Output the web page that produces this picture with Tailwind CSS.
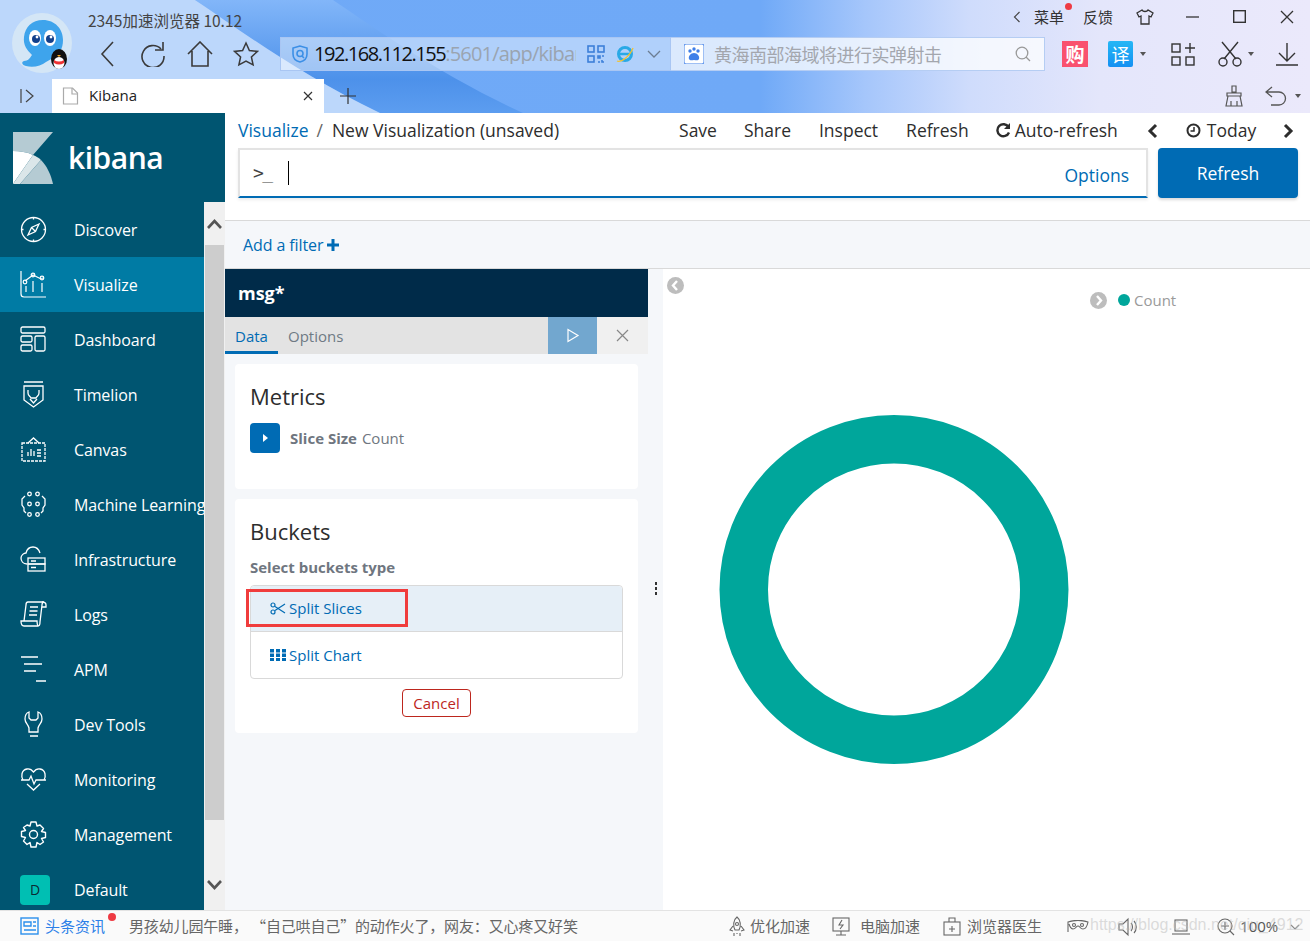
<!DOCTYPE html>
<html lang="en">
<head>
    <meta charset="UTF-8">
    <title>Kibana</title>
    <script src="https://cdn.jsdelivr.net/npm/@tailwindcss/browser@4"></script>
</head>
<body class="w-[1310px] h-[941px] overflow-hidden flex flex-col bg-white font-['Open_Sans','Noto_Sans_CJK_SC',sans-serif]">

    <!-- browser chrome -->
    <header class="relative h-[113px] shrink-0 overflow-hidden font-['Noto_Sans_CJK_SC','Open_Sans',sans-serif] text-[#333]">
        <svg class="absolute inset-0" width="1310" height="113" aria-hidden="true">
            <defs>
                <linearGradient id="sky" x1="0" y1="0" x2="1" y2="0">
                    <stop offset="0" stop-color="#70aaf7"/>
                    <stop offset="0.58" stop-color="#6fa9f7"/>
                    <stop offset="0.66" stop-color="#a5c6fb"/>
                    <stop offset="0.74" stop-color="#cfdcfc"/>
                    <stop offset="0.84" stop-color="#e4e6fb"/>
                    <stop offset="1" stop-color="#ebe9fb"/>
                </linearGradient>
                <linearGradient id="band" x1="0" y1="0" x2="0" y2="1">
                    <stop offset="0" stop-color="#82b6f9"/>
                    <stop offset="0.7" stop-color="#4d91ea"/>
                    <stop offset="1" stop-color="#5c9df0"/>
                </linearGradient>
            </defs>
            <rect width="1310" height="113" fill="url(#sky)"/>
            <path d="M195 0H333C370 25 440 75 523 113H380C300 75 240 30 195 0Z" fill="url(#band)"/>
            <path d="M0 0H195C240 30 300 75 380 113H0Z" fill="#bcd7fb"/>
        </svg>

        <div class="relative flex h-[79px]">
            <!-- logo -->
            <div class="w-[88px] shrink-0 pl-[12px] pt-[13px]">
                <svg width="62" height="62" viewBox="0 0 62 62">
                    <circle cx="30" cy="30" r="30" fill="#d4e6f6"/>
                    <path d="M31 7c12 0 20 9 20 20 0 9-4 15-10 18l-7 4c-5 4-13 6-20 4-4-1-5-4-2-5 4 0 6-3 8-6-5-5-9-10-8-18C13 14 20 7 31 7Z" fill="#3ea4ec"/>
                    <ellipse cx="23" cy="25" rx="6" ry="8" fill="#fff"/>
                    <ellipse cx="38" cy="25" rx="6" ry="8" fill="#fff"/>
                    <circle cx="24" cy="26" r="4" fill="#12408c"/>
                    <circle cx="38" cy="26" r="4" fill="#12408c"/>
                    <circle cx="25" cy="24" r="1.4" fill="#fff"/>
                    <circle cx="39" cy="24" r="1.4" fill="#fff"/>
                    <ellipse cx="47" cy="46" rx="8" ry="10" fill="#111"/>
                    <ellipse cx="47" cy="50" rx="5.5" ry="6" fill="#fff"/>
                    <path d="M42 47q5 3 10 0v3q-5 3-10 0Z" fill="#e33"/>
                    <path d="M45 42h4l-2 2Z" fill="#f5a623"/>
                </svg>
            </div>
            <div class="flex-1 min-w-0 flex flex-col">
                <!-- title row -->
                <div class="h-[36px] flex items-center pt-[5px] pr-[16px]">
                    <span class="text-[15.5px] text-[#444] leading-none">2345加速浏览器 10.12</span>
                    <div class="ml-auto mb-[8px] flex items-center">
                        <svg width="8" height="12" viewBox="0 0 8 12" fill="none" stroke="#444" stroke-width="1.2"><path d="M6.5 1 1.5 6l5 5"/></svg>
                        <span class="relative ml-[13px] text-[15px] leading-none">菜单<span class="absolute right-[-8px] top-[-6px] w-[7px] h-[7px] rounded-full bg-[#ee3a43]"></span></span>
                        <span class="ml-[19px] text-[15px] leading-none">反馈</span>
                        <svg class="ml-[23px]" width="18" height="16" viewBox="0 0 18 16" fill="none" stroke="#333" stroke-width="1.3"><path d="M6 1 1 4l2 4 2-1v8h8V7l2 1 2-4-5-3c-1 2-5 2-6 0Z"/></svg>
                        <svg class="ml-[32px]" width="13" height="13" viewBox="0 0 13 13" stroke="#333" stroke-width="1.3"><path d="M0 7h13"/></svg>
                        <svg class="ml-[34px]" width="13" height="13" viewBox="0 0 13 13" fill="none" stroke="#333" stroke-width="1.4"><rect x=".7" y=".7" width="11.6" height="11.6"/></svg>
                        <svg class="ml-[34px]" width="14" height="14" viewBox="0 0 14 14" stroke="#333" stroke-width="1.3"><path d="m1 1 12 12M13 1 1 13"/></svg>
                    </div>
                </div>
                <!-- toolbar row -->
                <div class="h-[36px] flex items-center">
                    <svg class="ml-[12px]" width="14" height="26" viewBox="0 0 14 26" fill="none" stroke="#3a3a3a" stroke-width="1.6"><path d="M13 1 2 13l11 12"/></svg>
                    <svg class="ml-[26px]" width="26" height="26" viewBox="0 0 26 26" fill="none" stroke="#3a3a3a" stroke-width="1.6"><path d="M21 8a11 11 0 1 0 3 7"/><path d="M23 1v8h-8"/></svg>
                    <svg class="ml-[21px]" width="26" height="26" viewBox="0 0 26 26" fill="none" stroke="#3a3a3a" stroke-width="1.6"><path d="M1 13 13 1l12 12M5 10v15h16V10"/></svg>
                    <svg class="ml-[20px]" width="26" height="26" viewBox="0 0 26 26" fill="none" stroke="#3a3a3a" stroke-width="1.5"><path d="m13 2 3.4 7.5 8 .9-6 5.5 1.7 8L13 20l-7.100 3.900 1.700-8-6-5.500 8-.9Z"/></svg>
                    <!-- address bar -->
                    <div class="ml-[21px] w-[391px] h-[34px] flex items-center bg-white/45 border border-[#a9c6f3] pl-[11px]">
                        <svg width="16" height="18" viewBox="0 0 16 18" fill="none" stroke="#3c8fe6" stroke-width="1.6"><path d="M8 1 1 3v6c0 4 3 7 7 8 4-1 7-4 7-8V3Z"/><circle cx="8" cy="8.500" r="3"/><path d="m10 11 2 2"/></svg>
                        <div class="ml-[6px] w-[262px] overflow-hidden whitespace-nowrap text-[20px] leading-none tracking-[-1.45px] font-['Open_Sans',sans-serif] text-[#111]">192.168.112.155<span class="text-[#9aa4b0] tracking-[-0.8px]">:5601/app/kibana#/visualize</span></div>
                        <svg class="ml-[11px]" width="18" height="18" viewBox="0 0 18 18" fill="none" stroke="#3c7fd9" stroke-width="1.600"><rect x="1" y="1" width="6" height="6"/><rect x="11" y="1" width="6" height="6"/><rect x="1" y="11" width="6" height="6"/><path d="M11 11h2v2h-2zM15 11h2M11 17h2M15 15v2h2"/></svg>
                        <svg class="ml-[10px]" width="20" height="20" viewBox="0 0 20 20" fill="none"><circle cx="10" cy="10" r="6.500" stroke="#29a9e6" stroke-width="3"/><path d="M5 10h10" stroke="#29a9e6" stroke-width="2.500"/><path d="M2 17c4 2 13-5 16-13" stroke="#f2c230" stroke-width="1.300"/></svg>
                        <svg class="ml-[12px]" width="14" height="8" viewBox="0 0 14 8" fill="none" stroke="#6c7d92" stroke-width="1.300"><path d="m1 1 6 6 6-6"/></svg>
                    </div>
                    <!-- search bar -->
                    <div class="w-[374px] h-[34px] flex items-center bg-white/75 border border-l-0 border-[#b5cdf3] pl-[13px]">
                        <svg width="20" height="20" viewBox="0 0 20 20"><rect width="20" height="20" rx="2" fill="#fff" stroke="#3f7fe8"/><g fill="#3f7fe8"><circle cx="6" cy="7" r="1.700"/><circle cx="10" cy="5" r="1.700"/><circle cx="14" cy="7" r="1.700"/><path d="M10 9c3 0 6 3 5 6-1 2-3 1-5 1s-4 1-5-1c-1-3 2-6 5-6Z"/></g></svg>
                        <span class="ml-[10px] text-[18px] leading-none text-[#a3a6ad] tracking-[-0.5px] whitespace-nowrap">黄海南部海域将进行实弹射击</span>
                        <svg class="ml-auto mr-[13px]" width="16" height="16" viewBox="0 0 16 16" fill="none" stroke="#999" stroke-width="1.300"><circle cx="7" cy="7" r="5.800"/><path d="m11 11 4 4"/></svg>
                    </div>
                    <!-- tools -->
                    <div class="ml-[17px] w-[26px] h-[26px] bg-[#f9516f] text-white text-[19px] font-bold leading-[26px] text-center">购</div>
                    <div class="ml-[20px] w-[25px] h-[26px] rounded-[2px] bg-gradient-to-b from-[#26b7f5] to-[#1590f2] text-white text-[18px] leading-[26px] text-center">译</div>
                    <span class="ml-[7px] w-0 h-0 border-x-[3px] border-x-transparent border-t-[4px] border-t-[#555]"></span>
                    <svg class="ml-[25px]" width="24" height="24" viewBox="0 0 24 24" fill="none" stroke="#333" stroke-width="1.400"><rect x="1" y="2" width="8" height="8"/><rect x="1" y="15" width="8" height="8"/><rect x="15" y="15" width="8" height="8"/><path d="M19 1v10M14 6h10"/></svg>
                    <svg class="ml-[23px]" width="24" height="26" viewBox="0 0 24 26" fill="none" stroke="#333" stroke-width="1.400"><path d="m4 1 14 17M20 1 6 18"/><circle cx="5" cy="21" r="4"/><circle cx="19" cy="21" r="4"/></svg>
                    <span class="ml-[6px] w-0 h-0 border-x-[3px] border-x-transparent border-t-[4px] border-t-[#555]"></span>
                    <svg class="ml-[22px]" width="22" height="24" viewBox="0 0 22 24" fill="none" stroke="#333" stroke-width="1.400"><path d="M11 1v17M3 11l8 8 8-8M0 23h22"/></svg>
                </div>
            </div>
        </div>

        <!-- tab row -->
        <div class="relative h-[34px] flex">
            <div class="w-[52px] flex items-center pl-[20px]">
                <svg width="14" height="14" viewBox="0 0 14 14" fill="none" stroke="#444" stroke-width="1.200"><path d="M1 0v14M6 1l7 6-7 6"/></svg>
            </div>
            <div class="w-[272px] bg-white flex items-center pl-[10px] font-['Open_Sans','Noto_Sans_CJK_SC',sans-serif]">
                <svg width="17" height="18" viewBox="0 0 17 18" fill="none" stroke="#aaa" stroke-width="1.200"><path d="M1.500 1h9l5 5v11h-14Z"/><path d="M10 1v6h6"/></svg>
                <span class="ml-[10px] mb-[2px] text-[15px] text-[#222]">Kibana</span>
                <svg class="ml-auto mr-[11px]" width="10" height="10" viewBox="0 0 10 10" stroke="#333" stroke-width="1.200"><path d="m1 1 8 8M9 1 1 9"/></svg>
            </div>
            <svg class="ml-[15px] self-center" width="18" height="18" viewBox="0 0 18 18" stroke="#333" stroke-width="1.200"><path d="M9 1v16M1 9h16"/></svg>
            <div class="ml-auto flex items-center pr-[9px]">
                <svg width="22" height="22" viewBox="0 0 22 22" fill="none" stroke="#555" stroke-width="1.200"><path d="M9 1h4v6H9ZM4 8h14v3H4ZM3 21l2-10h12l2 10ZM8 21v-5M14 21v-5"/></svg>
                <svg class="ml-[20px]" width="22" height="20" viewBox="0 0 22 20" fill="none" stroke="#555" stroke-width="1.300"><path d="M7 1 1 6l6 5M1 6h13a6 6 0 0 1 0 13H6"/></svg>
                <span class="ml-[8px] w-0 h-0 border-x-[3px] border-x-transparent border-t-[4px] border-t-[#555]"></span>
            </div>
        </div>
    </header>

    <!-- kibana app -->
    <div class="flex-1 min-h-0 flex">
        <aside class="w-[225px] shrink-0 flex flex-col bg-[#005571] text-white">
            <div class="h-[89px] shrink-0 flex items-center pl-[13px]">
                <svg width="41" height="52" viewBox="0 0 41 52">
                    <path d="M0 0h40L20 23C14 20 7 19 0 19Z" fill="#b5cbd3"/>
                    <path d="M0 19c7 0 14 1 20 4L0 52Z" fill="#fff"/>
                    <path d="M20 23 0 52h7l21-24c-2-2-5-4-8-5Z" fill="#dbe6e9"/>
                    <path d="M28 28C34 34 38 43 40 52H7Z" fill="#b5cbd3"/>
                </svg>
                <span class="ml-[14px] text-[30px] font-semibold leading-none tracking-[-0.5px]">kibana</span>
            </div>
            <div class="flex-1 min-h-0 flex">
                <nav class="w-[204px] text-[16px] tracking-[-0.1px] overflow-hidden">
                    <a class="h-[55px] flex items-center pl-[20px]">
                        <svg class="w-[27px] h-[27px] shrink-0" viewBox="0 0 27 27" fill="none" stroke="#fff" stroke-width="1.300"><circle cx="13.500" cy="13.500" r="12"/><path d="m19 8-3.500 7.500L8 19l3.500-7.500ZM11.500 11.500l4 4"/><path d="M13.500 1.500v2M13.500 23.500v2M1.500 13.500h2M23.500 13.500h2"/></svg>
                        <span class="ml-[27px] whitespace-nowrap">Discover</span>
                    </a>
                    <a class="h-[55px] flex items-center pl-[20px] bg-[#007ba4]">
                        <svg class="w-[27px] h-[27px] shrink-0" viewBox="0 0 27 27" fill="none" stroke="#fff" stroke-width="1.200"><path d="M1 0v23a3 3 0 0 0 3 3h22"/><path d="m5 10 8-6 7 3.500 4-.5"/><circle cx="5" cy="11" r="1.800"/><circle cx="13" cy="4" r="1.800"/><circle cx="22" cy="7" r="1.800"/><path d="M6 15v6M13 10v11M22 12v9"/></svg>
                        <span class="ml-[27px] whitespace-nowrap">Visualize</span>
                    </a>
                    <a class="h-[55px] flex items-center pl-[20px]">
                        <svg class="w-[27px] h-[27px] shrink-0" viewBox="0 0 27 27" fill="none" stroke="#fff" stroke-width="1.300"><rect x="1" y="1" width="24" height="6" rx="1.500"/><rect x="1" y="10" width="11" height="6" rx="1.500"/><rect x="1" y="19" width="11" height="6" rx="1.500"/><rect x="15" y="10" width="10" height="15" rx="1.500"/></svg>
                        <span class="ml-[27px] whitespace-nowrap">Dashboard</span>
                    </a>
                    <a class="h-[55px] flex items-center pl-[20px]">
                        <svg class="w-[27px] h-[27px] shrink-0" viewBox="0 0 27 27" fill="none" stroke="#fff" stroke-width="1.300"><path d="M4 1h19M4 5h19v14l-9.500 7L4 19Z"/><path d="M8 9v3c0 3 2 3 3 5h5c1-2 3-2 3-5V9"/><path d="m10 18 3.500 4 3.500-4"/></svg>
                        <span class="ml-[27px] whitespace-nowrap">Timelion</span>
                    </a>
                    <a class="h-[55px] flex items-center pl-[20px]">
                        <svg class="w-[27px] h-[27px] shrink-0" viewBox="0 0 27 27" fill="none" stroke="#fff" stroke-width="1.300"><path d="M2 7h23v18H2Z" stroke-dasharray="3 1"/><path d="m8 7 5.500-5L19 7"/><path d="M8 20v-4M11 20v-7M14 20v-5M17 14h4M17 17h4M17 20h4" /></svg>
                        <span class="ml-[27px] whitespace-nowrap">Canvas</span>
                    </a>
                    <a class="h-[55px] flex items-center pl-[20px]">
                        <svg class="w-[27px] h-[27px] shrink-0" viewBox="0 0 27 27" fill="none" stroke="#fff" stroke-width="1.300"><circle cx="9.500" cy="3" r="1.800"/><circle cx="17.500" cy="3" r="1.800"/><circle cx="9.500" cy="13" r="1.800"/><circle cx="17.500" cy="13" r="1.800"/><circle cx="9.500" cy="23.500" r="1.800"/><circle cx="17.500" cy="23.500" r="1.800"/><path d="M5 5 2 8v6l2 3v3l2 2M22 5l3 3v6l-2 3v3l-2 2"/></svg>
                        <span class="ml-[27px] whitespace-nowrap">Machine Learning</span>
                    </a>
                    <a class="h-[55px] flex items-center pl-[20px]">
                        <svg class="w-[27px] h-[27px] shrink-0" viewBox="0 0 27 27" fill="none" stroke="#fff" stroke-width="1.300"><path d="M7 18C3 18 1 15 1 12s3-5 5-5c1-4 4-6 7-6 4 0 6 3 7 6"/><rect x="8" y="12" width="17" height="6"/><rect x="8" y="18" width="17" height="7"/><path d="M11 15h5M11 21.500h5"/></svg>
                        <span class="ml-[27px] whitespace-nowrap">Infrastructure</span>
                    </a>
                    <a class="h-[55px] flex items-center pl-[20px]">
                        <svg class="w-[27px] h-[27px] shrink-0" viewBox="0 0 27 27" fill="none" stroke="#fff" stroke-width="1.300"><path d="M22 1H8C6 1 6 3 6 4l-2 16H1c0 3 1 5 3 5h14c2 0 2-2 2-4l2-17c0-2 1-3 2-3h-2ZM4 20h13c0 2 0 3 1 5"/><path d="M10 6h8M9.500 10h8M9 14h8"/><path d="M22 1c2 0 4 1 4 3v2h-4"/></svg>
                        <span class="ml-[27px] whitespace-nowrap">Logs</span>
                    </a>
                    <a class="h-[55px] flex items-center pl-[20px]">
                        <svg class="w-[27px] h-[27px] shrink-0" viewBox="0 0 27 27" fill="none" stroke="#fff" stroke-width="1.300"><path d="M1 1h17M4 8h18M4 15h12M16 25h10" /></svg>
                        <span class="ml-[27px] whitespace-nowrap">APM</span>
                    </a>
                    <a class="h-[55px] flex items-center pl-[20px]">
                        <svg class="w-[27px] h-[27px] shrink-0" viewBox="0 0 27 27" fill="none" stroke="#fff" stroke-width="1.300"><path d="M9 1C6 2 5 5 5 8c0 4 3 5 4 9v4h9v-4c1-4 4-5 4-9 0-3-1-6-4-7v6l-2 2h-5L9 7ZM10 25h8"/></svg>
                        <span class="ml-[27px] whitespace-nowrap">Dev Tools</span>
                    </a>
                    <a class="h-[55px] flex items-center pl-[20px]">
                        <svg class="w-[27px] h-[27px] shrink-0" viewBox="0 0 27 27" fill="none" stroke="#fff" stroke-width="1.300"><path d="M3 14C1 11 1 4 7 3c3-.5 5 1 6.500 3C15 4 17 2.500 20 3c6 1 6 8 4 11"/><path d="M1 14h8l2-4 3 8 2-4h10"/><path d="m7 18 6.500 6 6.500-6"/></svg>
                        <span class="ml-[27px] whitespace-nowrap">Monitoring</span>
                    </a>
                    <a class="h-[55px] flex items-center pl-[20px]">
                        <svg class="w-[27px] h-[27px] shrink-0" viewBox="0 0 27 27" fill="none" stroke="#fff" stroke-width="1.400"><circle cx="13.500" cy="13.500" r="4"/><path d="M11 1h5l1 4 3-1 3.500 3.500-2 3 4 1v5l-4 1 2 3.500L20 23.500l-3-2-1 4.500h-5l-1-4.500-3 2L3.500 20l2-3.500-4-1v-5l4-1-2-3L7 4l3 1Z" stroke-linejoin="round"/></svg>
                        <span class="ml-[27px] whitespace-nowrap">Management</span>
                    </a>
                    <a class="h-[55px] flex items-center pl-[20px]">
                        <span class="w-[30px] h-[30px] shrink-0 rounded-[4px] bg-[#00bfb3] text-[#0a2a33] text-[14px] leading-[30px] text-center">D</span>
                        <span class="ml-[24px] whitespace-nowrap">Default</span>
                    </a>
                </nav>
                <!-- scrollbar -->
                <div class="w-[21px] shrink-0 flex flex-col bg-[#f0f0f0]">
                    <div class="h-[43px] shrink-0 flex items-center justify-center">
                        <svg width="15" height="10" viewBox="0 0 15 10" fill="none" stroke="#555" stroke-width="2.600"><path d="m1 9 6.500-7L14 9"/></svg>
                    </div>
                    <div class="h-[575px] shrink-0 w-[19px] ml-[1px] bg-[#cdcdcd]"></div>
                    <div class="flex-1 flex items-center justify-center pt-[40px]">
                        <svg width="15" height="10" viewBox="0 0 15 10" fill="none" stroke="#555" stroke-width="2.600"><path d="m1 1 6.500 7L14 1"/></svg>
                    </div>
                </div>
            </div>
        </aside>

        <main class="flex-1 min-w-0 flex flex-col text-[#2d2d2d]">
            <!-- top nav -->
            <div class="h-[35px] shrink-0 flex items-center text-[17.500px] pl-[13px] whitespace-nowrap">
                <span class="text-[#006bb4]">Visualize</span>
                <span class="ml-[8px] text-[#666]">/</span>
                <span class="ml-[9px]">New Visualization (unsaved)</span>
                <span class="ml-[120px]">Save</span>
                <span class="ml-[27px]">Share</span>
                <span class="ml-[28px]">Inspect</span>
                <span class="ml-[28px]">Refresh</span>
                <svg class="ml-[27px]" width="15" height="15" viewBox="0 0 15 15" fill="none" stroke="#2d2d2d" stroke-width="2.400"><path d="M12.500 4A6 6 0 1 0 13 9.500"/><path d="M14 0v6H8" fill="#2d2d2d" stroke="none"/></svg>
                <span class="ml-[4px]">Auto-refresh</span>
                <svg class="ml-[29px]" width="11" height="16" viewBox="0 0 11 16" fill="none" stroke="#2d2d2d" stroke-width="3"><path d="M9 2 3 8l6 6"/></svg>
                <svg class="ml-[28px]" width="15" height="15" viewBox="0 0 15 15" fill="none" stroke="#2d2d2d" stroke-width="2"><circle cx="7.500" cy="7.500" r="6"/><path d="M8 4v4H4.500" stroke-width="1.500"/></svg>
                <span class="ml-[6px]">Today</span>
                <svg class="ml-[27px]" width="11" height="16" viewBox="0 0 11 16" fill="none" stroke="#2d2d2d" stroke-width="3"><path d="m2 2 6 6-6 6"/></svg>
            </div>

            <!-- query bar -->
            <div class="h-[73px] shrink-0 flex pl-[13px] pr-[12px] border-b border-[#d9d9d9]">
                <div class="w-[910px] h-[50px] flex items-center border-2 border-[#e3e3e3] border-b-[#006bb4] shadow-[0_2px_3px_rgba(0,0,0,0.08)] pl-[13px] pr-[17px]">
                    <span class="text-[18px] leading-none text-[#444] font-['DejaVu_Sans_Mono',monospace] tracking-[-1.5px]">&gt;_</span>
                    <span class="ml-[16px] w-px h-[24px] bg-black"></span>
                    <span class="ml-auto pt-[5px] text-[17.500px] text-[#006bb4]">Options</span>
                </div>
                <button class="ml-[10px] w-[140px] h-[50px] rounded-[4px] bg-[#006bb4] text-white text-[17.500px] shadow-[0_2px_3px_rgba(0,0,0,0.15)]">Refresh</button>
            </div>

            <!-- filter bar -->
            <div class="h-[48px] shrink-0 flex items-center pl-[18px] bg-[#f5f7fa] border-b border-[#d9d9d9] text-[16px] tracking-[-0.1px] text-[#006bb4]">
                <span>Add a filter</span>
                <svg class="ml-[4px]" width="12" height="12" viewBox="0 0 12 12" fill="#006bb4"><path d="M4.500 0h3v4.500H12v3H7.500V12h-3V7.500H0v-3h4.500Z"/></svg>
            </div>

            <!-- editor -->
            <div class="flex-1 min-h-0 flex">
                <div class="w-[438px] shrink-0 flex bg-[#f5f7fa]">
                    <div class="w-[423px] shrink-0">
                        <div class="h-[48px] flex items-center pl-[13px] bg-[#002b49] text-white text-[18px] font-bold">msg*</div>
                        <div class="h-[37px] flex bg-[#e3e3e3] text-[15px]">
                            <span class="w-[53px] pt-[4px] flex items-center justify-center text-[#006bb4] border-b-[3px] border-[#006bb4]">Data</span>
                            <span class="ml-[10px] pt-[2px] flex items-center text-[#6f7a84]">Options</span>
                            <span class="ml-auto w-[49px] flex items-center justify-center bg-[#72a7cf]">
                                <svg width="14" height="15" viewBox="0 0 14 15" fill="none" stroke="#fff" stroke-width="1.200"><path d="M2 1.500v12l10-6Z"/></svg>
                            </span>
                            <span class="w-[51px] flex items-center justify-center bg-[#f0f0f0]">
                                <svg width="13" height="13" viewBox="0 0 13 13" stroke="#888" stroke-width="1.200"><path d="m1 1 11 11M12 1 1 12"/></svg>
                            </span>
                        </div>
                        <div class="px-[10px] pt-[10px]">
                            <section class="h-[125px] bg-white rounded-[4px] pl-[15px] pt-[16px]">
                                <h2 class="text-[22px] leading-[32px] text-[#2d2d2d]">Metrics</h2>
                                <div class="mt-[11px] flex items-center">
                                    <span class="w-[30px] h-[30px] rounded-[4px] bg-[#006bb4] flex items-center justify-center">
                                        <span class="w-0 h-0 border-y-[4px] border-y-transparent border-l-[5px] border-l-white"></span>
                                    </span>
                                    <span class="ml-[10px] text-[15px] font-bold text-[#6f7680]">Slice Size</span>
                                    <span class="ml-[5px] text-[15px] text-[#6f7680]">Count</span>
                                </div>
                            </section>
                            <section class="mt-[10px] h-[234px] bg-white rounded-[4px] px-[15px] pt-[16px]">
                                <h2 class="text-[22px] leading-[32px] text-[#2d2d2d]">Buckets</h2>
                                <p class="mt-[10px] text-[15px] leading-[20px] font-bold text-[#6f7680]">Select buckets type</p>
                                <div class="relative mt-[8px] h-[94px] border border-[#d9d9d9] rounded-[4px] text-[15px] text-[#006bb4]">
                                    <div class="h-[46px] flex items-center pl-[19px] bg-[#e6eff7] border-b border-[#d9d9d9] rounded-t-[4px]">
                                        <svg width="16" height="13" viewBox="0 0 16 13" fill="none" stroke="#006bb4" stroke-width="1.200"><circle cx="3" cy="3" r="2"/><circle cx="3" cy="10" r="2"/><path d="M5 4.500 15 11M5 8.500 15 2"/></svg>
                                        <span class="ml-[3px]">Split Slices</span>
                                    </div>
                                    <div class="h-[46px] flex items-center pl-[19px]">
                                        <svg width="16" height="12" viewBox="0 0 16 12" fill="#006bb4"><path d="M0 0h4v3.500H0ZM6 0h4v3.500H6ZM12 0h4v3.500h-4ZM0 4.500h4V8H0ZM6 4.500h4V8H6ZM12 4.500h4V8h-4ZM0 9h4v3H0ZM6 9h4v3H6ZM12 9h4v3h-4Z"/></svg>
                                        <span class="ml-[3px]">Split Chart</span>
                                    </div>
                                    <!-- red annotation box -->
                                    <div class="absolute left-[-5px] top-[3px] w-[162px] h-[38px] border-[3px] border-[#f03c3c]"></div>
                                </div>
                                <div class="mt-[10px] flex justify-center">
                                    <button class="w-[69px] h-[28px] border border-[#bd271e] rounded-[4px] text-[15px] text-[#bd271e]">Cancel</button>
                                </div>
                            </section>
                        </div>
                    </div>
                    <div class="flex-1 flex flex-col items-center justify-center gap-[2px] pb-[2px]">
                        <span class="w-[2px] h-[3px] bg-[#333]"></span>
                        <span class="w-[2px] h-[3px] bg-[#333]"></span>
                        <span class="w-[2px] h-[3px] bg-[#333]"></span>
                    </div>
                </div>
                <!-- chart -->
                <div class="relative flex-1 min-w-0 bg-white">
                    <div class="pl-[4px] pt-[8px]">
                        <span class="block w-[17px] h-[17px] rounded-full bg-[#bdbdbd]">
                            <svg width="17" height="17" viewBox="0 0 17 17" fill="none" stroke="#fff" stroke-width="2.400"><path d="M10 4 6 8.500l4 4.500"/></svg>
                        </span>
                    </div>
                    <div class="absolute left-[427px] top-[20px] flex items-center text-[15px] text-[#9a9a9a]">
                        <span class="block w-[17px] h-[17px] rounded-full bg-[#bdbdbd]">
                            <svg width="17" height="17" viewBox="0 0 17 17" fill="none" stroke="#fff" stroke-width="2.400"><path d="m7 4 4 4.500L7 13"/></svg>
                        </span>
                        <span class="ml-[11px] w-[12px] h-[12px] rounded-full bg-[#00a69b]"></span>
                        <span class="ml-[4px]">Count</span>
                    </div>
                    <svg class="absolute left-[56px] top-[145px]" width="350" height="350" viewBox="0 0 350 350"><circle cx="175" cy="175.500" r="150.250" fill="none" stroke="#00a69b" stroke-width="48.500"/></svg>
                </div>
            </div>
        </main>
    </div>

    <!-- browser status bar -->
    <footer class="relative h-[31px] shrink-0 flex items-center pt-[1px] bg-[#fafafa] border-t border-[#e3e3e3] font-['Noto_Sans_CJK_SC','Open_Sans',sans-serif] text-[15px] text-[#666]">
        <svg class="ml-[20px]" width="19" height="19" viewBox="0 0 19 19" fill="none" stroke="#2b8fec" stroke-width="1.400"><rect x="1" y="1" width="17" height="16"/><path d="M4 5h7v4H4ZM13 5h3M13 9h3M4 13h12"/></svg>
        <span class="relative ml-[6px] text-[#2b7fe8]">头条资讯<span class="absolute right-[-11px] top-[-2px] w-[8px] h-[8px] rounded-full bg-[#ee3a43]"></span></span>
        <span class="ml-[24px] w-[450px] whitespace-nowrap tracking-[-0.15px]">男孩幼儿园午睡， “自己哄自己”的动作火了，网友：又心疼又好笑</span>
        <svg class="ml-[149px]" width="18" height="22" viewBox="0 0 18 22" fill="none" stroke="#666" stroke-width="1.100"><path d="M9 1c4 3 4 9 2 13H7C5 10 5 4 9 1ZM5 10l-3 4 3 1M13 10l3 4-3 1M9 17v1M6 17v3M12 17v3"/><circle cx="9" cy="8" r="1.500"/></svg>
        <span class="ml-[4px]">优化加速</span>
        <svg class="ml-[22px]" width="18" height="20" viewBox="0 0 18 20" fill="none" stroke="#666" stroke-width="1.100"><rect x="1" y="1" width="16" height="13"/><path d="M10 3 7 8h4l-3 4M9 14v4M4 18h10"/></svg>
        <span class="ml-[10px]">电脑加速</span>
        <svg class="ml-[23px]" width="18" height="19" viewBox="0 0 18 19" fill="none" stroke="#666" stroke-width="1.100"><rect x="1" y="5" width="16" height="13"/><path d="M6 5V1h6v4M9 9v6M6 12h6"/></svg>
        <span class="ml-[6px]">浏览器医生</span>
        <svg class="ml-[25px]" width="22" height="13" viewBox="0 0 22 13" fill="none" stroke="#666" stroke-width="1.100"><path d="M1 12V2c6-2 14-2 20 0-1 5-3 7-5 7-3 0-3-3-5-3s-2 3-5 3c-2 0-3-2-4-5"/><circle cx="7" cy="5" r="1.500"/><circle cx="15" cy="5" r="1.500"/></svg>
        <svg class="ml-[29px]" width="20" height="20" viewBox="0 0 20 20" fill="none" stroke="#666" stroke-width="1.100"><path d="M1 7v6h4l5 5V2L5 7ZM13 6c2 2 2 6 0 8M16 4c3 3 3 9 0 12"/></svg>
        <svg class="ml-[33px]" width="20" height="18" viewBox="0 0 20 18" fill="none" stroke="#666" stroke-width="1.100"><rect x="4" y="2" width="12" height="11"/><path d="M1 16h18"/></svg>
        <svg class="ml-[26px]" width="18" height="18" viewBox="0 0 18 18" fill="none" stroke="#666" stroke-width="1.100"><circle cx="8" cy="8" r="7"/><path d="M8 4v8M4 8h8M13 13l4 4"/></svg>
        <span class="ml-[5px] font-['Open_Sans',sans-serif] text-[15px] text-[#555]">100%</span>
        <svg class="ml-[12px]" width="10" height="6" viewBox="0 0 10 6" fill="none" stroke="#888" stroke-width="1.100"><path d="m1 1 4 4 4-4"/></svg>
        <!-- image watermark -->
        <span class="absolute left-[1090px] top-[2px] text-[16px] font-['Liberation_Sans',sans-serif] text-[#bbb]/50 whitespace-nowrap">https://blog.csdn.net/qiu_4912</span>
    </footer>
</body>
</html>
